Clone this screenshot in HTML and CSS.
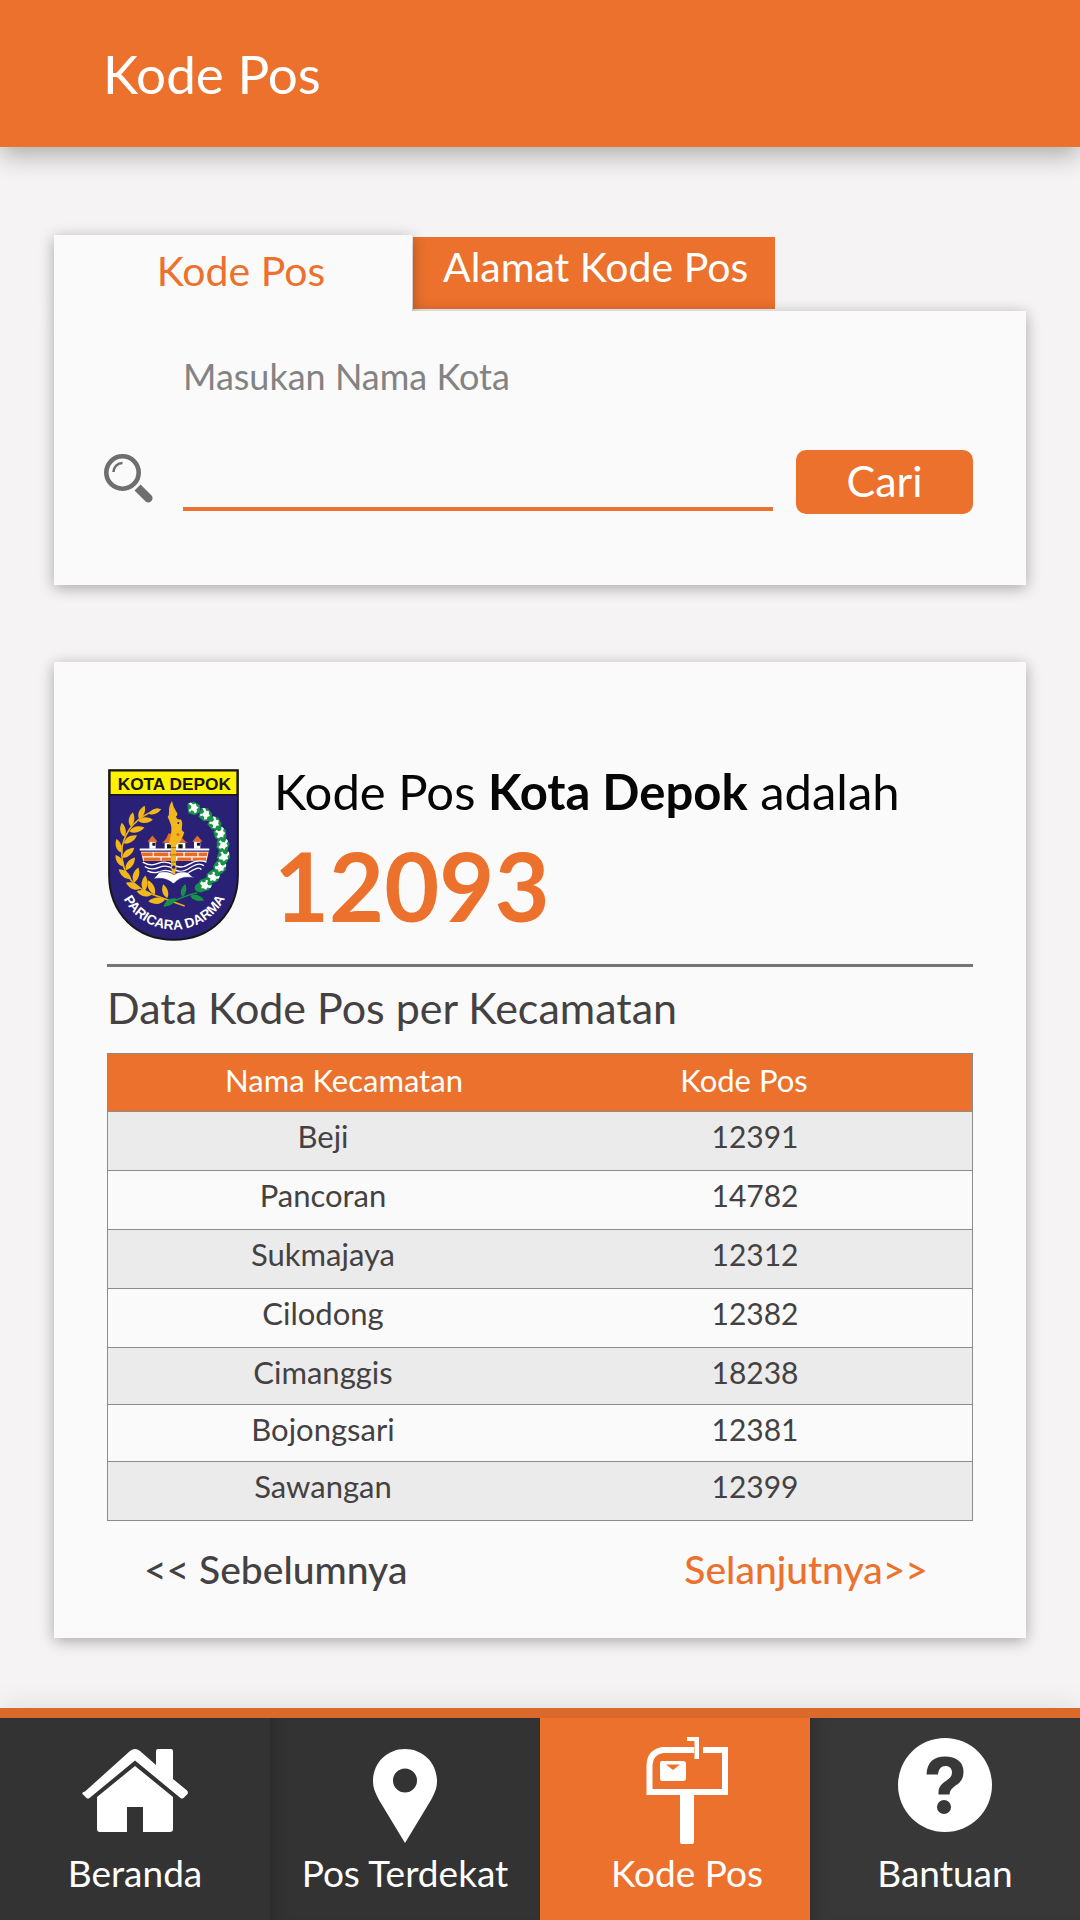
FILE: index.html
```html
<!DOCTYPE html>
<html lang="id">
<head>
<meta charset="utf-8">
<meta name="viewport" content="width=device-width, initial-scale=1">
<title>Kode Pos</title>
<link rel="stylesheet" href="styles.css">
</head>
<body>
<header class="app-bar"><h1 class="app-title">Kode Pos</h1></header>

<main class="content">
  <section class="search">
    <div class="tabs" role="tablist">
      <button class="tab tab-active" type="button" role="tab" aria-selected="true">Kode Pos</button>
      <button class="tab" type="button" role="tab" aria-selected="false">Alamat Kode Pos</button>
    </div>
    <form class="card search-form">
      <label class="search-label" for="kota">Masukan Nama Kota</label>
      <svg class="search-icon" viewBox="0 0 49 49" aria-hidden="true">
        <circle cx="18.500" cy="18.500" r="16.200" fill="none" stroke="#6e6e6e" stroke-width="4.600"/>
        <path d="M9.500 18a9 9 0 0 1 9-9" fill="none" stroke="#6e6e6e" stroke-width="2.600"/>
        <path d="M30.500 36.500l6-6L47.600 41.600a4.300 4.300 0 0 1-6 6z" fill="#6e6e6e"/>
      </svg>
      <input class="search-input" id="kota" type="text">
      <button class="search-button" type="submit">Cari</button>
    </form>
  </section>

  <section class="card result">
    <div class="summary">
      <svg class="emblem" viewBox="54 56 393 517" role="img" aria-label="Lambang Kota Depok">
        <defs>
          <path id="motto" d="M106 456A171 171 0 0 0 400 454"/>
          <path id="leaf" d="M0 0C-9-9-9-24 2-36C10-24 9-9 0 0z"/>
          <g id="cotton">
            <path d="M-19-12L0-20L19-10L20 11L4 20L-16 15z" fill="#159447"/>
            <path d="M-16-14L-8-17L-2-11L6-14L9-6L15-2L9 3L10 11L3 15L0 8L-6 6L-11 11L-15 5L-8 0L-7-7z" fill="#fff"/>
          </g>
        </defs>
        <path d="M57 60H444V374C444 490 362 569 251 569C139 569 57 490 57 374z" fill="#2a2076" stroke="#171717" stroke-width="6"/>
        <path d="M59 61H442V134H59z" fill="#fff200" stroke="#171717" stroke-width="5"/>
        <text x="253" y="118" class="emblem-name" text-anchor="middle">KOTA DEPOK</text>
        <path d="M204 176Q112 210 96 290Q86 390 180 430Q240 452 284 468" fill="none" stroke="#e3ad1c" stroke-width="5"/>
        <g fill="#f0b81c">
          <use href="#leaf" transform="translate(177 191) rotate(65) scale(1.100)"/>
          <use href="#leaf" transform="translate(147 206) rotate(20) scale(1.200)"/>
          <use href="#leaf" transform="translate(145 212) rotate(82) scale(1.200)"/>
          <use href="#leaf" transform="translate(122 229) rotate(5) scale(1.200)"/>
          <use href="#leaf" transform="translate(118 244) rotate(72) scale(1.300)"/>
          <use href="#leaf" transform="translate(103 260) rotate(-14) scale(1.200)"/>
          <use href="#leaf" transform="translate(101 280) rotate(55) scale(1.300)"/>
          <use href="#leaf" transform="translate(93 307) rotate(-22) scale(1.200)"/>
          <use href="#leaf" transform="translate(97 323) rotate(46) scale(1.300)"/>
          <use href="#leaf" transform="translate(102 349) rotate(-40) scale(1.200)"/>
          <use href="#leaf" transform="translate(107 360) rotate(33) scale(1.300)"/>
          <use href="#leaf" transform="translate(123 386) rotate(-56) scale(1.300)"/>
          <use href="#leaf" transform="translate(132 397) rotate(13) scale(1.300)"/>
          <use href="#leaf" transform="translate(151 416) rotate(-70) scale(1.300)"/>
          <use href="#leaf" transform="translate(163 423) rotate(0) scale(1.300)"/>
          <use href="#leaf" transform="translate(185 434) rotate(-80) scale(1.300)"/>
          <use href="#leaf" transform="translate(194 433) rotate(-28) scale(1.300)"/>
          <use href="#leaf" transform="translate(225 449) rotate(-98) scale(1.400)"/>
          <use href="#leaf" transform="translate(232 444) rotate(-20) scale(1.200)"/>
        </g>
        <path d="M222 469Q270 440 322 428" fill="none" stroke="#159447" stroke-width="5"/>
        <g fill="#159447">
          <use href="#leaf" transform="translate(277 440) rotate(10) scale(1.100)"/>
          <use href="#leaf" transform="translate(301 438) rotate(104) scale(1.200)"/>
          <use href="#leaf" transform="translate(222 468) rotate(55) scale(1.200)"/>
          <ellipse cx="331" cy="413" rx="17" ry="14"/>
        </g>
        <use href="#cotton" transform="translate(311 174)"/>
        <use href="#cotton" transform="translate(346 193) rotate(25)"/>
        <use href="#cotton" transform="translate(374 219) rotate(35)"/>
        <use href="#cotton" transform="translate(391 250) rotate(60)"/>
        <use href="#cotton" transform="translate(399 284) rotate(80)"/>
        <use href="#cotton" transform="translate(401 319) rotate(95)"/>
        <use href="#cotton" transform="translate(390 351) rotate(110)"/>
        <use href="#cotton" transform="translate(369 380) rotate(130)"/>
        <use href="#cotton" transform="translate(345 404) rotate(145)"/>
        <g fill="#e96a20">
          <path d="M172 275L187 256L203 275zM307 275L322 256L338 275z"/>
          <path d="M215 277Q229 271 235 250H270Q277 271 294 277z"/>
        </g>
        <path d="M178 275H197V296H178zM312 275H331V296H312zM224 278H286V296H224z" fill="#fff"/>
        <path d="M187 278H196V287H187zM321 278H330V287H321zM231 282H244V296H231zM265 282H278V296H265z" fill="#171717"/>
        <path d="M149 295H358V301H149z" fill="#fff"/>
        <path d="M153 305H356L350 332H159z" fill="#fff"/>
        <path d="M155 307H188V318H157zM192 307H235V318H192zM239 307H280V318H239zM284 307H322V318H284zM326 307H353L351 318H326zM160 322H211V332H162zM215 322H258V332H215zM262 322H304V332H262zM308 322H350L347 332H308z" fill="#e96a20"/>
        <path d="M158 336Q181 350 204 340T250 344T298 342T350 336M164 349Q184 362 207 352T251 357T300 353T342 347M172 362Q192 372 213 364T252 370T300 365T334 359" fill="none" stroke="#fff" stroke-width="4"/>
        <path d="M190 386Q202 376 207 366Q238 361 252 374Q267 361 295 367Q300 377 315 384Q279 375 258 394Q251 405 244 396Q222 380 190 386z" fill="#fff" stroke="#2a2076" stroke-width="2"/>
        <path d="M246 152Q236 166 237 184Q238 196 233 200Q238 209 243 224Q247 240 238 274Q235 282 243 285V346Q243 354 246 365L252 376L257 365Q262 354 258 344V285Q276 273 283 245Q273 244 276 230Q279 217 273 207Q261 210 258 198Q267 196 257 181Q250 171 246 152z" fill="#f0b81c"/>
        <path d="M244 292H259M244 314H259M244 336H259" stroke="#a86c12" stroke-width="3"/>
        <circle cx="251" cy="351" r="5" fill="#2a2076"/>
        <circle cx="265" cy="218" r="3" fill="#2a2076"/>
        <circle cx="264" cy="253" r="5" fill="#e96a20"/>
        <text class="emblem-motto" text-anchor="middle"><textPath href="#motto" startOffset="50%">PARICARA DARMA</textPath></text>
      </svg>
      <div class="summary-text">
        <p class="summary-city">Kode Pos <b>Kota Depok</b> adalah</p>
        <p class="summary-code">12093</p>
      </div>
    </div>
    <h2 class="table-title">Data Kode Pos per Kecamatan</h2>
    <table class="codes">
      <thead><tr><th scope="col">Nama Kecamatan</th><th scope="col">Kode Pos</th></tr></thead>
      <tbody>
        <tr><td>Beji</td><td>12391</td></tr>
        <tr><td>Pancoran</td><td>14782</td></tr>
        <tr><td>Sukmajaya</td><td>12312</td></tr>
        <tr><td>Cilodong</td><td>12382</td></tr>
        <tr class="compact"><td>Cimanggis</td><td>18238</td></tr>
        <tr class="compact"><td>Bojongsari</td><td>12381</td></tr>
        <tr><td>Sawangan</td><td>12399</td></tr>
      </tbody>
    </table>
    <div class="pager">
      <a class="pager-link" href="#sebelumnya">&lt;&lt; Sebelumnya</a>
      <a class="pager-link pager-next" href="#selanjutnya">Selanjutnya&gt;&gt;</a>
    </div>
  </section>
</main>

<nav class="bottom-nav">
  <a class="nav-item" href="#beranda">
    <svg class="nav-icon" viewBox="0 0 108 108" aria-hidden="true" fill="#fff">
      <path d="M4 54.500L49 14Q54 10 59 14L75 28V14Q75 12 77 12H90Q92 12 92 14V42L106 53.500Q107.500 55 106.500 57L102.500 61Q101 62 99.500 61L54 23.500L8.500 61Q7 62 5.500 61L1.500 57Q.500 55.500 4 54.500z"/>
      <path d="M54 29L92 60V92Q92 95 89 95H62V70H46V95H19Q16 95 16 92V60z"/>
    </svg>
    <span>Beranda</span>
  </a>
  <a class="nav-item nav-shaded" href="#terdekat">
    <svg class="nav-icon" viewBox="0 0 108 108" aria-hidden="true">
      <path d="M54 12C36 12 22 26 22 44C22 51 24 55 28 63L54 106L80 63C84 55 86 51 86 44C86 26 72 12 54 12zM54 31.500a12 12 0 0 1 0 24a12 12 0 0 1 0-24z" fill="#fff"/>
    </svg>
    <span>Pos Terdekat</span>
  </a>
  <a class="nav-item nav-current" href="#kodepos" aria-current="page">
    <svg class="nav-icon" viewBox="0 0 108 108" aria-hidden="true">
      <path d="M61 13H30Q17 15 16.500 28V55H92V13H70" fill="none" stroke="#fff" stroke-width="6"/>
      <path d="M54 0H66V22H61.500V4H54zM47 57H61V105Q61 107 59 107H49Q47 107 47 105zM29 24H50Q53 24 53 27V41Q53 44 50 44H29Q27 44 27 41V27Q27 24 29 24z" fill="#fff"/>
      <path d="M33 27.500H47L40 33z" fill="#eb712d"/>
    </svg>
    <span>Kode Pos</span>
  </a>
  <a class="nav-item nav-last nav-shaded" href="#bantuan">
    <svg class="nav-icon" viewBox="0 0 108 108" aria-hidden="true">
      <circle cx="54" cy="48" r="47" fill="#fff"/>
      <path d="M35.500 37.500C36 25 43 19.500 54 19.500C65 19.500 72.500 25 72.500 34.500C72.500 50 59 47 58.500 57.500H47.500C46.500 43 61 45 61 35.500C61 31.500 58.500 29 54.500 29C50 29 47.500 32 47 37.500z" fill="#383838"/>
      <circle cx="53" cy="70" r="7" fill="#383838"/>
    </svg>
    <span>Bantuan</span>
  </a>
</nav>
</body>
</html>
```
FILE: styles.css
```css
:root {
  --orange: #eb712d;
  --card: #fafafa;
  --text: #444142;
}

* { box-sizing: border-box; }

body {
  margin: 0;
  min-height: 100vh;
  display: flex;
  flex-direction: column;
  background: #f5f3f4;
  color: var(--text);
  font-family: Lato, sans-serif;
}

h1, h2, p { margin: 0; font-weight: 400; }
a { text-decoration: none; }
button, input { font: inherit; border: 0; padding: 0; }

.app-bar {
  padding: 42px 103px 41px;
  background: var(--orange);
  color: #fff;
  box-shadow: 0 8px 24px rgba(0, 0, 0, .3);
}
.app-title { font-size: 53px; line-height: 64px; }

.content {
  display: flex;
  flex-direction: column;
  gap: 77px;
  padding: 88px 54px 70px;
}

.card {
  background: var(--card);
  box-shadow: 0 3px 14px rgba(0, 0, 0, .32);
}

.tabs { display: flex; align-items: flex-start; }
.tab {
  height: 72px;
  margin: 2px 0 0 1px;
  padding: 0 27px 12px 30px;
  background: var(--orange);
  color: #fff;
  font-size: 41px;
  line-height: 48px;
}
.tab-active {
  position: relative;
  z-index: 2;
  width: 358px;
  height: 76px;
  margin: 0;
  padding: 0 0 4px 16px;
  background: var(--card);
  color: var(--orange);
  box-shadow: 0 3px 14px rgba(0, 0, 0, .32);
  /* keeps the tab's shadow off the face of the card below it */
  clip-path: polygon(-20px -20px, calc(100% + 20px) -20px, calc(100% + 20px) 100%, 0 100%, 0 calc(100% + 20px), -20px calc(100% + 20px));
}

.search-form {
  position: relative;
  z-index: 1;
  display: grid;
  grid-template-columns: 56px 1fr 177px;
  column-gap: 23px;
  row-gap: 52px;
  align-items: start;
  padding: 43px 53px 71px 50px;
}
.search-label {
  grid-column: 2 / 4;
  color: #838383;
  font-size: 36px;
  line-height: 44px;
}
.search-icon { grid-column: 1; width: 49px; height: 49px; margin-top: 4px; }
.search-input {
  width: 100%;
  height: 61px;
  border-bottom: 4px solid var(--orange);
  background: transparent;
  color: var(--text);
  font-size: 36px;
  outline: 0;
}
.search-button {
  height: 64px;
  padding-bottom: 2px;
  border-radius: 10px;
  background: var(--orange);
  color: #fff;
  font-size: 43px;
  line-height: 52px;
}

.result { padding: 107px 53px 46px; }
.summary {
  display: flex;
  gap: 35px;
  padding: 0 0 23px 1px;
  border-bottom: 3px solid #757575;
}
.emblem { flex: none; width: 131px; height: 172px; }
.emblem-name { font: 900 52px "Liberation Sans", Arial, sans-serif; fill: #171717; }
.emblem-motto { font: 700 41px "Liberation Sans", Arial, sans-serif; fill: #fff; }
.summary-text { display: flex; flex-direction: column; gap: 24px; }
.summary-city { color: #060606; font-size: 49px; line-height: 44px; }
.summary-code { color: var(--orange); font-size: 95px; font-weight: 700; line-height: 96px; }

.table-title { margin: 15px 0 19px; font-size: 43px; line-height: 52px; }

.codes {
  width: 100%;
  table-layout: fixed;
  border-collapse: collapse;
  border: 1px solid #8c8c8c;
  font-size: 31px;
  line-height: 36px;
  text-align: center;
}
.codes tr { height: 59px; border-bottom: 1px solid #8c8c8c; }
.codes thead tr { height: 58px; }
.codes tbody .compact { height: 57px; }
.codes th, .codes td { padding: 8px 0 0; vertical-align: top; font-weight: 400; }
.codes tbody td { padding: 6px 2px 0 0; }
.codes thead { background: var(--orange); color: #fff; }
.codes th:first-child { padding-left: 40px; }
.codes th:last-child { padding-right: 24px; }
.codes td:last-child { font-size: 30px; }
.codes tbody tr:nth-child(odd) { background: #ebebeb; }

.pager {
  display: flex;
  justify-content: space-between;
  padding: 25px 45px 0 37px;
}
.pager-link { color: var(--text); font-size: 39px; font-weight: 500; line-height: 46px; }
.pager-next { color: var(--orange); }

.bottom-nav {
  display: grid;
  grid-template-columns: repeat(4, 1fr);
  margin-top: auto;
  border-top: 10px solid #db692b;
  box-shadow: 0 -4px 24px rgba(0, 0, 0, .08);
}
.nav-item {
  display: flex;
  flex-direction: column;
  align-items: center;
  gap: 6px;
  padding: 19px 0 25px;
  background: #333;
  color: #fff;
  font-size: 37px;
  line-height: 44px;
}
.nav-icon { width: 108px; height: 108px; }
.nav-current { padding-left: 24px; background: var(--orange); }
.nav-last { background: #383838; }
.nav-shaded { box-shadow: inset 16px 0 16px -12px rgba(0, 0, 0, .2); }
```
